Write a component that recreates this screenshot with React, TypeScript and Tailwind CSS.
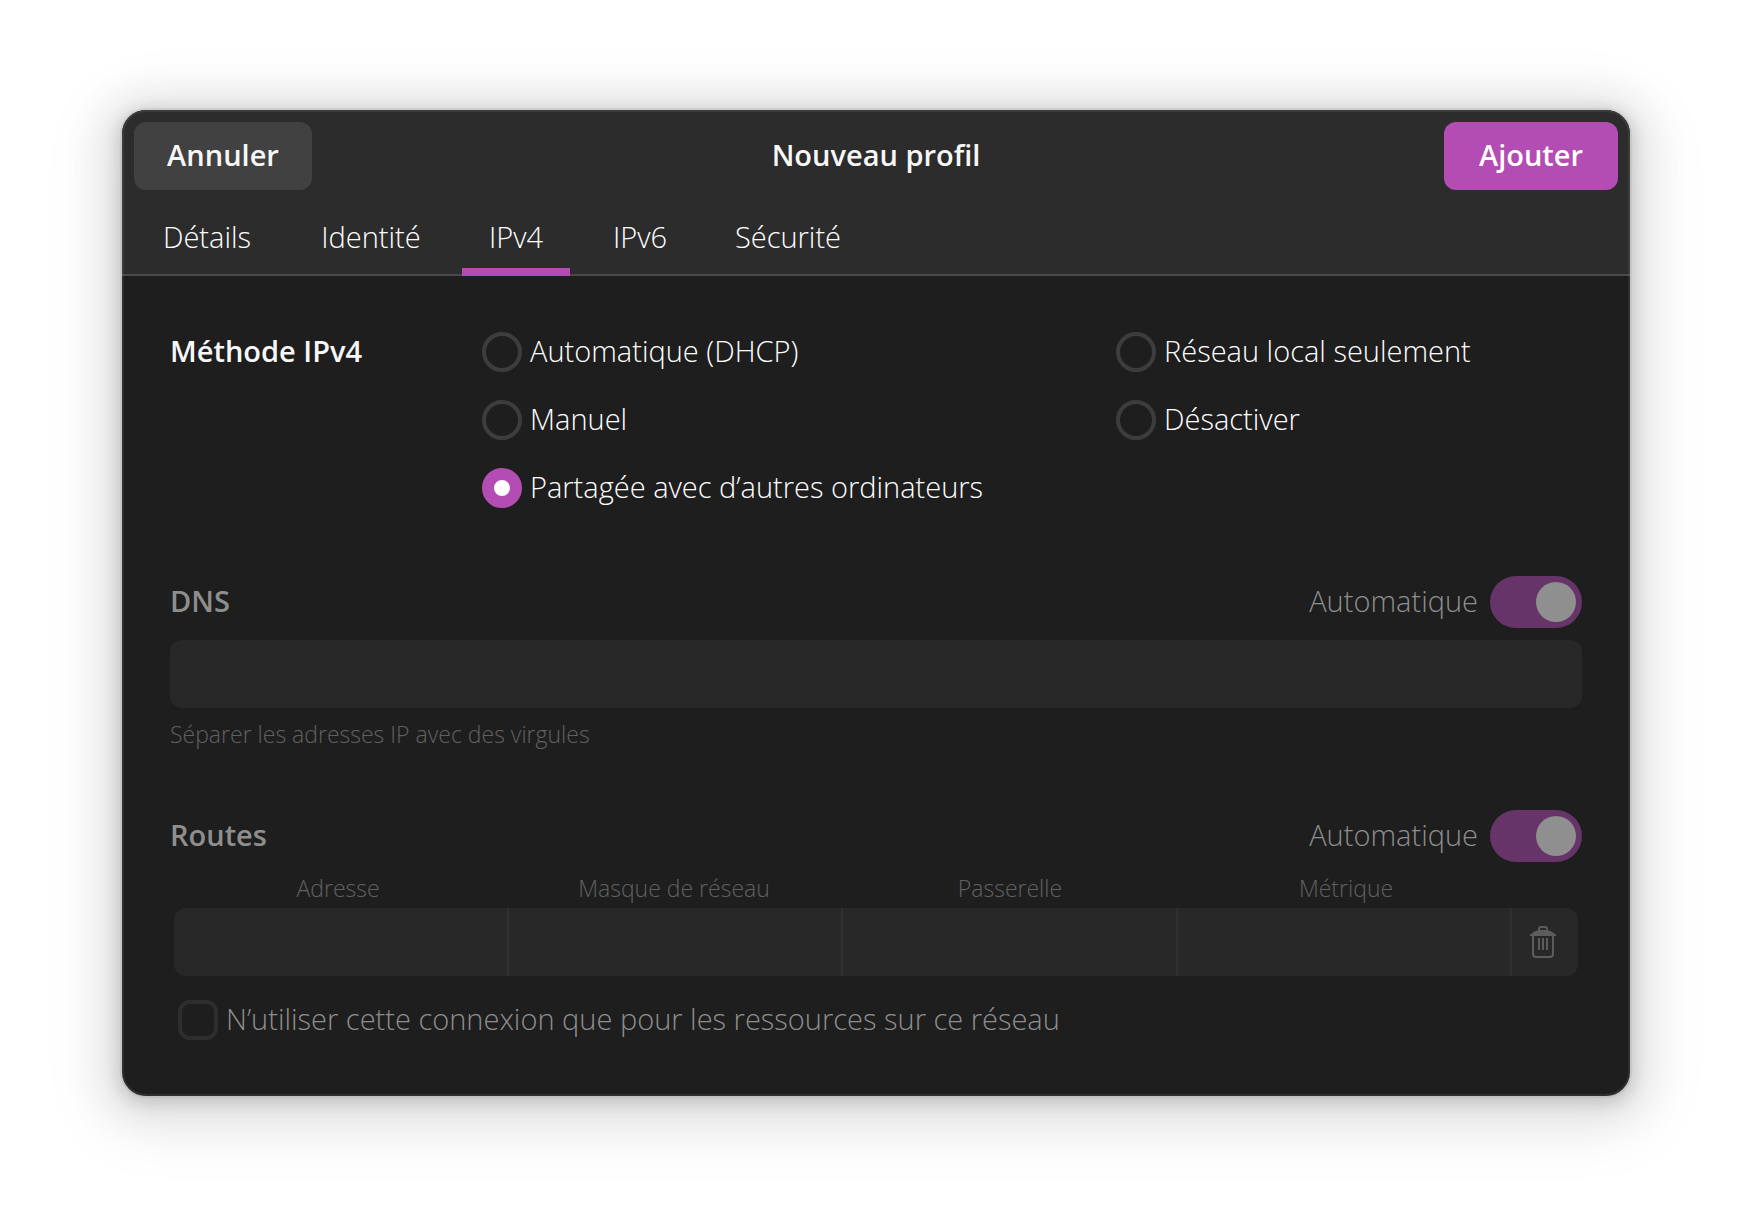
import { useState } from "react";

const tabs = [
  { name: "Détails", width: "w-[146px]" },
  { name: "Identité", width: "w-[150px]" },
  { name: "IPv4", width: "w-[108px]" },
  { name: "IPv6", width: "w-[108px]" },
  { name: "Sécurité", width: "w-[156px]" },
];

const methods = [
  "Automatique (DHCP)",
  "Réseau local seulement",
  "Manuel",
  "Désactiver",
  "Partagée avec d’autres ordinateurs",
];

const routeFields = [
  { id: "adresse", label: "Adresse" },
  { id: "masque", label: "Masque de réseau" },
  { id: "passerelle", label: "Passerelle" },
  { id: "metrique", label: "Métrique" },
];

function TrashIcon() {
  return (
    <svg viewBox="0 0 26 32" className="h-8 w-[26px]" fill="none" aria-hidden="true">
      <path d="M9 5V3Q9 1 11 1H15Q17 1 17 3V5" stroke="currentColor" strokeWidth="2" />
      <path d="M2 8V7Q6 4 10 4H16Q20 4 24 7V8H26V10H0V8Z" fill="currentColor" />
      <path d="M3 10V28Q3 31 6 31H20Q23 31 23 28V10" stroke="currentColor" strokeWidth="2" />
      <path d="M9 12V24M13 12V24M17 12V24" stroke="currentColor" strokeWidth="2" />
    </svg>
  );
}

function AutoSwitch({ id }: { id: string }) {
  return (
    <div className="flex items-center gap-3">
      <label htmlFor={id} className="pb-0.5">Automatique</label>
      <span className="relative flex">
        <input
          id={id}
          type="checkbox"
          role="switch"
          defaultChecked
          disabled
          className="h-[52px] w-[92px] appearance-none rounded-full bg-[#673469]"
        />
        <span className="pointer-events-none absolute right-1.5 top-1.5 size-10 rounded-full bg-[#8f8f8f]" />
      </span>
    </div>
  );
}

export default function App() {
  const [method, setMethod] = useState(methods[4]);
  const [tab, setTab] = useState("IPv4");

  return (
    <div className="min-h-screen bg-white px-[122px] py-[110px] font-['Open_Sans',sans-serif] text-[29px] leading-[38px] font-light text-white">
      <main className="relative overflow-hidden rounded-3xl bg-[#1e1e1e] shadow-[0_0_0_2px_rgba(0,0,0,0.05),0_4px_16px_4px_rgba(0,0,0,0.13),0_6px_40px_20px_rgba(0,0,0,0.09),0_12px_64px_32px_rgba(0,0,0,0.04)]">
        <header className="bg-[#2c2c2c] px-3 pt-3 shadow-[inset_0_-2px_0_#4a4a4a]">
          <div className="grid grid-cols-[1fr_auto_1fr] items-center font-semibold text-[#f7f7f7]">
            <button type="button" className="h-[68px] w-[178px] rounded-xl bg-[#414141] pb-0.5">
              Annuler
            </button>
            <h1 className="pb-0.5">Nouveau profil</h1>
            <button type="button" className="h-[68px] w-[174px] justify-self-end rounded-xl bg-[#b34cb3] pb-0.5 text-white">
              Ajouter
            </button>
          </div>
          <nav role="tablist" className="mt-2.5 flex gap-4">
            {tabs.map((t) => (
              <button
                key={t.name}
                type="button"
                role="tab"
                aria-selected={tab === t.name}
                onClick={() => setTab(t.name)}
                className={`h-[76px] border-b-8 pt-1.5 ${t.width} ${tab === t.name ? "border-[#b34cb3]" : "border-transparent"}`}
              >
                {t.name}
              </button>
            ))}
          </nav>
        </header>

        <div className="px-12 py-14">
          <fieldset className="grid grid-cols-[312px_1fr]">
            <h2 id="methode" className="font-semibold text-[#f7f7f7]">Méthode IPv4</h2>
            <div role="radiogroup" aria-labelledby="methode" className="grid grid-cols-[634fr_466fr] gap-y-7">
              {methods.map((m) => (
                <label key={m} className="flex items-center gap-2">
                  <input
                    type="radio"
                    name="methode"
                    checked={method === m}
                    onChange={() => setMethod(m)}
                    className="size-10 shrink-0 appearance-none rounded-full border-4 border-[#3d3d3d] checked:border-12 checked:border-[#b34cb3] checked:bg-white"
                  />
                  <span className="pb-0.5">{m}</span>
                </label>
              ))}
            </div>
          </fieldset>

          <section className="mt-[68px] text-[#8e8e8e]">
            <div className="flex items-center justify-between">
              <label htmlFor="dns" className="pb-0.5 font-semibold">DNS</label>
              <AutoSwitch id="dns-auto" />
            </div>
            <input id="dns" type="text" disabled className="mt-3 block h-[68px] w-full rounded-xl bg-[#282828] px-4" />
            <p className="mt-2.5 text-[23px] leading-8 text-[#616161]">Séparer les adresses IP avec des virgules</p>
          </section>

          <section className="mt-15 text-[#8e8e8e]">
            <div className="flex items-center justify-between">
              <h2 className="pb-0.5 font-semibold">Routes</h2>
              <AutoSwitch id="routes-auto" />
            </div>
            <div className="mt-2.5 grid grid-cols-[repeat(4,1fr)_68px] text-center text-[23px] leading-8 text-[#616161]">
              {routeFields.map((f) => (
                <label key={f.id} htmlFor={f.id}>{f.label}</label>
              ))}
            </div>
            <div className="mx-1 mt-1 flex h-[68px] overflow-hidden rounded-xl bg-[#282828]">
              {routeFields.map((f) => (
                <input key={f.id} id={f.id} type="text" disabled className="min-w-0 flex-1 border-r-2 border-[#303030] px-4" />
              ))}
              <button type="button" disabled aria-label="Supprimer la route" className="flex w-[66px] items-center justify-center pr-1 text-[#5c5c5c]">
                <TrashIcon />
              </button>
            </div>
            <label className="mt-6 ml-2 flex items-center gap-2">
              <input type="checkbox" disabled className="size-10 shrink-0 appearance-none rounded-xl border-4 border-[#2e2e2e]" />
              <span className="pb-0.5">N’utiliser cette connexion que pour les ressources sur ce réseau</span>
            </label>
          </section>
        </div>
        <div className="pointer-events-none absolute inset-0 rounded-3xl border-2 border-white/7" />
      </main>
    </div>
  );
}
